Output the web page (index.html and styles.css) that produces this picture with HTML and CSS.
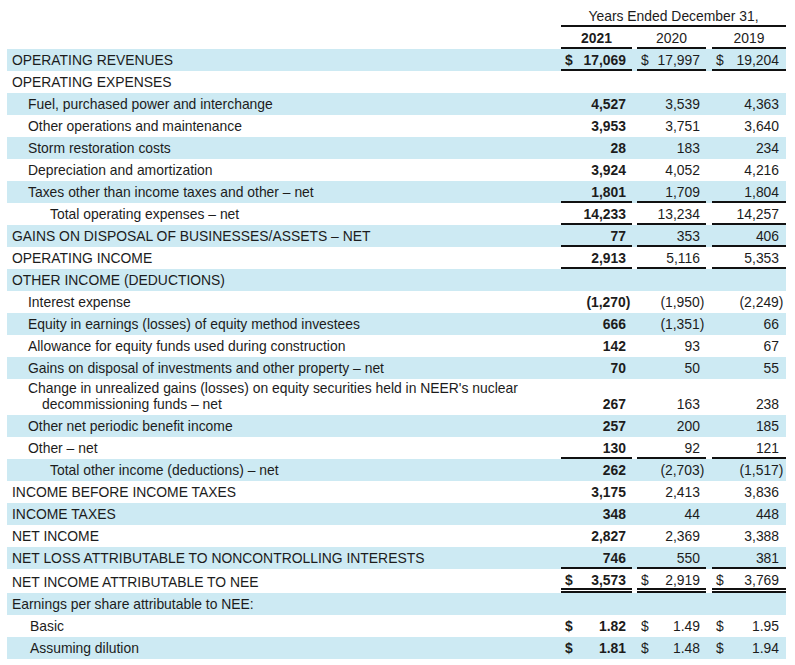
FILE: index.html
```html
<!DOCTYPE html>
<html lang="en">
<head>
<meta charset="utf-8">
<title>Consolidated Statements of Income</title>
<link rel="stylesheet" href="styles.css">
</head>
<body>
<table class="fin">
  <colgroup>
    <col class="c-label">
    <col class="c-y1">
    <col class="c-sp1">
    <col class="c-y2">
    <col class="c-sp2">
    <col class="c-y3">
  </colgroup>
  <thead>
    <tr>
      <td class="l"></td>
      <td class="hdr ul" colspan="5">Years Ended December 31,</td>
    </tr>
    <tr>
      <td class="l"></td>
      <td class="yr b ul">2021</td>
      <td class="sp"></td>
      <td class="yr ul">2020</td>
      <td class="sp"></td>
      <td class="yr ul">2019</td>
    </tr>
  </thead>
  <tbody>
    <tr>
      <td class="l">OPERATING REVENUES</td>
      <td class="v b ul"><span class="c">$</span>17,069</td><td class="sp"></td>
      <td class="v ul"><span class="c">$</span>17,997</td><td class="sp"></td>
      <td class="v last ul"><span class="c">$</span>19,204</td>
    </tr>
    <tr>
      <td class="l">OPERATING EXPENSES</td>
      <td class="v b"></td><td class="sp"></td><td class="v"></td><td class="sp"></td><td class="v last"></td>
    </tr>
    <tr>
      <td class="l l1">Fuel, purchased power and interchange</td>
      <td class="v b">4,527</td><td class="sp"></td>
      <td class="v">3,539</td><td class="sp"></td>
      <td class="v last">4,363</td>
    </tr>
    <tr>
      <td class="l l1">Other operations and maintenance</td>
      <td class="v b">3,953</td><td class="sp"></td>
      <td class="v">3,751</td><td class="sp"></td>
      <td class="v last">3,640</td>
    </tr>
    <tr>
      <td class="l l1">Storm restoration costs</td>
      <td class="v b">28</td><td class="sp"></td>
      <td class="v">183</td><td class="sp"></td>
      <td class="v last">234</td>
    </tr>
    <tr>
      <td class="l l1">Depreciation and amortization</td>
      <td class="v b">3,924</td><td class="sp"></td>
      <td class="v">4,052</td><td class="sp"></td>
      <td class="v last">4,216</td>
    </tr>
    <tr>
      <td class="l l1">Taxes other than income taxes and other – net</td>
      <td class="v b ul">1,801</td><td class="sp"></td>
      <td class="v ul">1,709</td><td class="sp"></td>
      <td class="v last ul">1,804</td>
    </tr>
    <tr>
      <td class="l l2">Total operating expenses – net</td>
      <td class="v b ul">14,233</td><td class="sp"></td>
      <td class="v ul">13,234</td><td class="sp"></td>
      <td class="v last ul">14,257</td>
    </tr>
    <tr>
      <td class="l">GAINS ON DISPOSAL OF BUSINESSES/ASSETS – NET</td>
      <td class="v b ul">77</td><td class="sp"></td>
      <td class="v ul">353</td><td class="sp"></td>
      <td class="v last ul">406</td>
    </tr>
    <tr>
      <td class="l">OPERATING INCOME</td>
      <td class="v b ul">2,913</td><td class="sp"></td>
      <td class="v ul">5,116</td><td class="sp"></td>
      <td class="v last ul">5,353</td>
    </tr>
    <tr>
      <td class="l">OTHER INCOME (DEDUCTIONS)</td>
      <td class="v b"></td><td class="sp"></td><td class="v"></td><td class="sp"></td><td class="v last"></td>
    </tr>
    <tr>
      <td class="l l1">Interest expense</td>
      <td class="v b n">(1,270)</td><td class="sp"></td>
      <td class="v n">(1,950)</td><td class="sp"></td>
      <td class="v last n">(2,249)</td>
    </tr>
    <tr>
      <td class="l l1">Equity in earnings (losses) of equity method investees</td>
      <td class="v b">666</td><td class="sp"></td>
      <td class="v n">(1,351)</td><td class="sp"></td>
      <td class="v last">66</td>
    </tr>
    <tr>
      <td class="l l1">Allowance for equity funds used during construction</td>
      <td class="v b">142</td><td class="sp"></td>
      <td class="v">93</td><td class="sp"></td>
      <td class="v last">67</td>
    </tr>
    <tr>
      <td class="l l1">Gains on disposal of investments and other property – net</td>
      <td class="v b">70</td><td class="sp"></td>
      <td class="v">50</td><td class="sp"></td>
      <td class="v last">55</td>
    </tr>
    <tr>
      <td class="l hang">Change in unrealized gains (losses) on equity securities held in NEER's nuclear decommissioning funds – net</td>
      <td class="v b">267</td><td class="sp"></td>
      <td class="v">163</td><td class="sp"></td>
      <td class="v last">238</td>
    </tr>
    <tr>
      <td class="l l1">Other net periodic benefit income</td>
      <td class="v b">257</td><td class="sp"></td>
      <td class="v">200</td><td class="sp"></td>
      <td class="v last">185</td>
    </tr>
    <tr>
      <td class="l l1">Other – net</td>
      <td class="v b ul">130</td><td class="sp"></td>
      <td class="v ul">92</td><td class="sp"></td>
      <td class="v last ul">121</td>
    </tr>
    <tr>
      <td class="l l2">Total other income (deductions) – net</td>
      <td class="v b">262</td><td class="sp"></td>
      <td class="v n">(2,703)</td><td class="sp"></td>
      <td class="v last n">(1,517)</td>
    </tr>
    <tr>
      <td class="l">INCOME BEFORE INCOME TAXES</td>
      <td class="v b">3,175</td><td class="sp"></td>
      <td class="v">2,413</td><td class="sp"></td>
      <td class="v last">3,836</td>
    </tr>
    <tr>
      <td class="l">INCOME TAXES</td>
      <td class="v b">348</td><td class="sp"></td>
      <td class="v">44</td><td class="sp"></td>
      <td class="v last">448</td>
    </tr>
    <tr>
      <td class="l">NET INCOME</td>
      <td class="v b">2,827</td><td class="sp"></td>
      <td class="v">2,369</td><td class="sp"></td>
      <td class="v last">3,388</td>
    </tr>
    <tr>
      <td class="l">NET LOSS ATTRIBUTABLE TO NONCONTROLLING INTERESTS</td>
      <td class="v b ul">746</td><td class="sp"></td>
      <td class="v ul">550</td><td class="sp"></td>
      <td class="v last ul">381</td>
    </tr>
    <tr>
      <td class="l">NET INCOME ATTRIBUTABLE TO NEE</td>
      <td class="v b dul"><span class="c">$</span>3,573</td><td class="sp"></td>
      <td class="v dul"><span class="c">$</span>2,919</td><td class="sp"></td>
      <td class="v last dul"><span class="c">$</span>3,769</td>
    </tr>
    <tr>
      <td class="l">Earnings per share attributable to NEE:</td>
      <td class="v b"></td><td class="sp"></td><td class="v"></td><td class="sp"></td><td class="v last"></td>
    </tr>
    <tr>
      <td class="l l3">Basic</td>
      <td class="v b"><span class="c">$</span>1.82</td><td class="sp"></td>
      <td class="v"><span class="c">$</span>1.49</td><td class="sp"></td>
      <td class="v last"><span class="c">$</span>1.95</td>
    </tr>
    <tr>
      <td class="l l3">Assuming dilution</td>
      <td class="v b"><span class="c">$</span>1.81</td><td class="sp"></td>
      <td class="v"><span class="c">$</span>1.48</td><td class="sp"></td>
      <td class="v last"><span class="c">$</span>1.94</td>
    </tr>
  </tbody>
</table>
</body>
</html>
```

FILE: styles.css
```css
html, body {
  margin: 0;
  padding: 0;
  background: #ffffff;
}

body {
  color: #1c1c1c;
  font-family: "Liberation Sans", Arial, sans-serif;
  font-size: 13.9px;
}

.fin {
  margin: 5px 0 0 7px;
  width: 779px;
  table-layout: fixed;
  border-collapse: separate;
  border-spacing: 0;
  line-height: 16px;
}

.c-label { width: 554px; }
.c-y1 { width: 71px; }
.c-sp1 { width: 5px; }
.c-y2 { width: 69px; }
.c-sp2 { width: 6px; }
.c-y3 { width: 74px; }

.fin tbody tr:nth-child(odd) {
  background: #cdeaf3;
}

.fin td {
  padding: 3px 0;
  vertical-align: bottom;
  white-space: nowrap;
}

.fin td.l {
  padding-left: 5px;
  text-align: left;
}

.fin td.l1 { padding-left: 21px; }
.fin td.l2 { padding-left: 43px; }
.fin td.l3 { padding-left: 23px; }

.fin td.hang {
  white-space: normal;
  padding: 2px 0 3px 35px;
  text-indent: -14px;
  line-height: 15.5px;
}

.fin td.hdr,
.fin td.yr {
  text-align: center;
}

.fin td.v {
  text-align: right;
  padding: 3px 6px 3px 4px;
}

.fin td.v.last { padding-right: 7px; }
.fin td.v.n { padding-right: 1.6px; }
.fin td.v.last.n { padding-right: 2.6px; }

.fin td.ul {
  border-bottom: 2px solid #111111;
  padding-bottom: 1px;
}

.fin td.dul {
  border-bottom: 5px double #111111;
  padding-bottom: 0;
}

.b { font-weight: bold; }

.c {
  float: left;
}
```
